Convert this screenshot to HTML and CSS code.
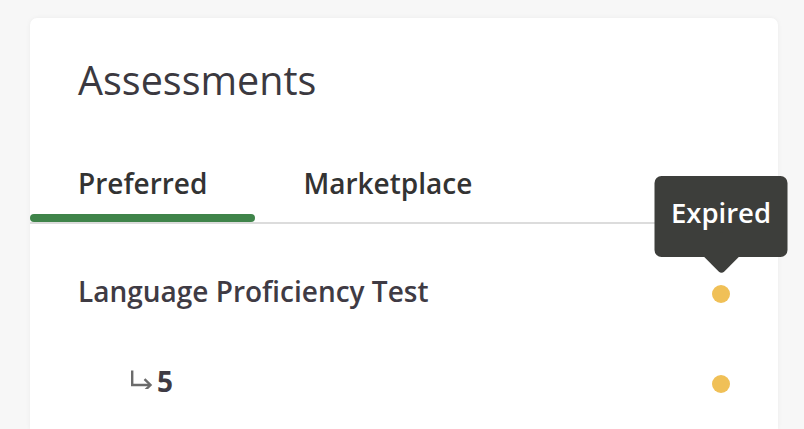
FILE: index.html
```html
<!DOCTYPE html>
<html lang="en">
<head>
<meta charset="utf-8">
<title>Assessments</title>
<link rel="stylesheet" href="styles.css">
</head>
<body>
<div class="card">
  <h1 class="title">Assessments</h1>
  <div class="tabs">
    <div class="tab active"><span class="tab-label">Preferred</span><span class="indicator"></span></div>
    <div class="tab"><span class="tab-label">Marketplace</span><span class="indicator"></span></div>
  </div>
  <div class="list">
    <div class="row">
      <span class="row-name">Language Proficiency Test</span>
      <span class="status">
        <span class="dot"></span>
        <span class="tooltip">Expired</span>
      </span>
    </div>
    <div class="row sub">
      <span class="row-name">
        <svg class="sub-arrow" width="24" height="20" viewBox="0 0 24 20" aria-hidden="true">
          <path d="M2.2 1.5 V16 H20" fill="none" stroke="#6b6b6b" stroke-width="2.4"/>
          <path d="M14.5 10.2 L20.5 16 L14.5 21.8" fill="none" stroke="#6b6b6b" stroke-width="2.4"/>
        </svg>
        <span class="sub-num">5</span>
      </span>
      <span class="status"><span class="dot"></span></span>
    </div>
  </div>
</div>
</body>
</html>
```
FILE: styles.css
```css
html, body {
  margin: 0;
  padding: 0;
  background: #f7f7f7;
  font-family: "Open Sans", "Noto Sans", sans-serif;
}
body {
  padding: 18px 26px 0 30px;
  height: 429px;
  box-sizing: border-box;
  overflow: hidden;
}
.card {
  background: #ffffff;
  border-radius: 7px 7px 0 0;
  box-shadow: 0 0 5px rgba(0, 0, 0, 0.05);
  padding-top: 38px;
  height: 411px;
  box-sizing: border-box;
}
.title {
  margin: 0 0 59px 48px;
  font-size: 39.5px;
  line-height: 48px;
  font-weight: 400;
  color: #3b3940;
}
.tabs {
  display: flex;
  border-bottom: 2px solid #dcdcdc;
}
.tab {
  display: flex;
  flex-direction: column;
}
.tab-label {
  padding: 0 48px 11px;
  font-size: 28px;
  line-height: 40px;
  font-weight: 600;
  color: #333333;
}
.indicator {
  height: 8px;
  border-radius: 4px;
  background: transparent;
}
.tab.active .indicator {
  background: #3f844a;
}
.list {
  padding: 22px 48px 0 48px;
}
.row {
  display: flex;
  justify-content: space-between;
  align-items: center;
  padding: 25px 0;
}
.row-name {
  display: flex;
  align-items: center;
  font-size: 28px;
  line-height: 40px;
  font-weight: 600;
  color: #3f3b44;
}
.sub .row-name {
  padding-left: 52px;
}
.sub-arrow {
  margin-right: 3px;
  margin-top: -4px;
}
.sub-num {
  font-size: 28px;
  font-weight: 700;
}
.status {
  position: relative;
  display: flex;
  margin-top: 6px;
}
.dot {
  width: 18px;
  height: 18px;
  border-radius: 50%;
  background: #f0c057;
}
.tooltip {
  position: absolute;
  left: 50%;
  bottom: calc(100% + 28px);
  transform: translateX(-50%);
  width: 133px;
  height: 81px;
  box-sizing: border-box;
  padding-bottom: 8px;
  display: flex;
  align-items: center;
  justify-content: center;
  background: #3d3e3b;
  color: #ffffff;
  border-radius: 7px;
  font-size: 27.5px;
  font-weight: 600;
  line-height: 40px;
}
.tooltip::after {
  content: "";
  position: absolute;
  left: 50%;
  top: 100%;
  width: 30px;
  height: 30px;
  background: #3d3e3b;
  border-radius: 0 0 4px 0;
  transform: translate(-50%, -50%) rotate(45deg);
  margin-top: -4px;
  z-index: -1;
}
```
